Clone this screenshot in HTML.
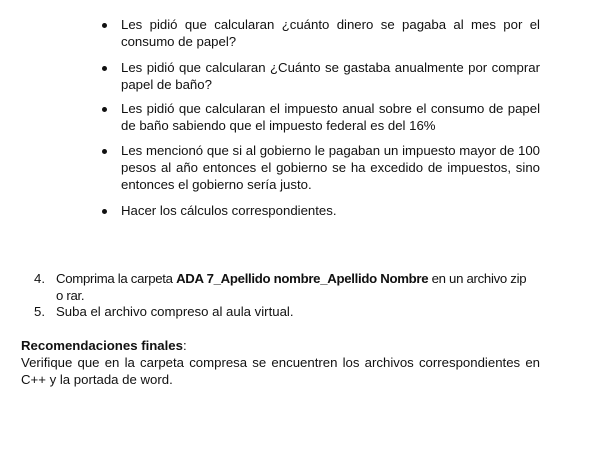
<!DOCTYPE html>
<html><head><meta charset="utf-8"><style>
body{margin:0;width:608px;height:452px;background:#fff;position:relative;overflow:hidden;font-family:"Liberation Sans",Arial,sans-serif;font-size:13.2px;color:#111;}
.p{position:absolute;line-height:17.2px;text-align:justify;}
.b{left:121px;width:419px;}
.dot{position:absolute;left:-19px;top:7px;width:5px;height:5px;border-radius:50%;background:#111;}
.n{left:56px;width:484px;}
.num{position:absolute;left:-22px;}
</style></head><body>
<div class="p b" style="top:16px"><span class="dot"></span>Les pidió que calcularan ¿cuánto dinero se pagaba al mes por el consumo de papel?</div>
<div class="p b" style="top:59px"><span class="dot"></span>Les pidió que calcularan ¿Cuánto se gastaba anualmente por comprar papel de baño?</div>
<div class="p b" style="top:100px"><span class="dot"></span>Les pidió que calcularan el impuesto anual sobre el consumo de papel de baño sabiendo que el impuesto federal es del 16%</div>
<div class="p b" style="top:142px"><span class="dot"></span>Les mencionó que si al gobierno le pagaban un impuesto mayor de 100 pesos al año entonces el gobierno se ha excedido de impuestos, sino entonces el gobierno sería justo.</div>
<div class="p b" style="top:202px"><span class="dot"></span>Hacer los cálculos correspondientes.</div>
<div class="p n" style="top:270px;width:520px;text-align:left;white-space:nowrap;letter-spacing:-0.3px"><span class="num" style="letter-spacing:0">4.</span>Comprima la carpeta <b>ADA 7_Apellido nombre_Apellido Nombre</b> en un archivo zip<br>o rar.</div>
<div class="p n" style="top:303px"><span class="num">5.</span>Suba el archivo compreso al aula virtual.</div>
<div class="p" style="top:337px;left:21px;width:519px"><b>Recomendaciones finales</b>:<br>Verifique que en la carpeta compresa se encuentren los archivos correspondientes en C++ y la portada de word.</div>
</body></html>
